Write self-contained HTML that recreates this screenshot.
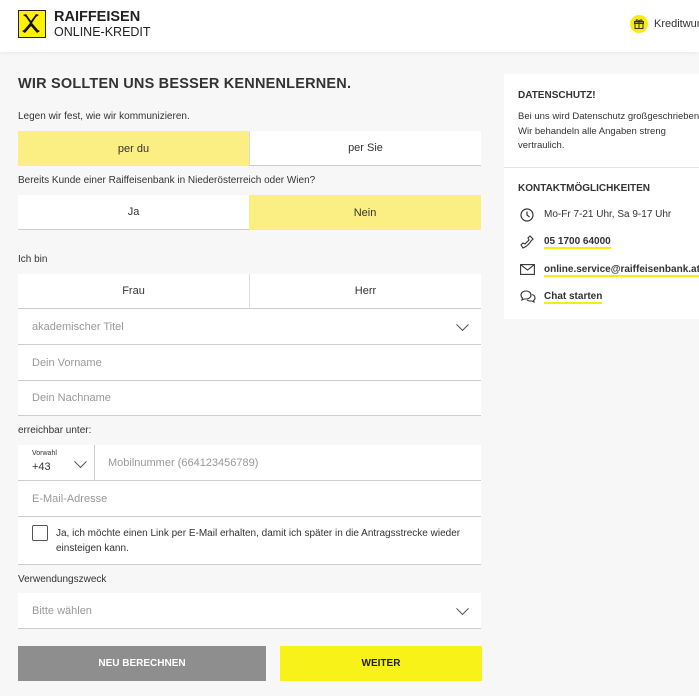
<!DOCTYPE html>
<html><head><meta charset="utf-8"><style>
*{box-sizing:border-box;margin:0;padding:0}
body{width:699px;height:696px;overflow:hidden;background:#f7f7f7;font-family:"Liberation Sans",sans-serif;color:#333;position:relative}
.a{position:absolute}
.hdr{left:0;top:0;width:699px;height:52px;background:#fff;box-shadow:0 1px 4px rgba(0,0,0,.06)}
.box{background:#fff;border-bottom:1px solid #ccc}
.t{font-size:11px;color:#333}
.ph{font-size:11px;color:#999;padding-left:14px;display:flex;align-items:center}
.tg{display:flex;align-items:center;justify-content:center;font-size:11px;color:#333}
.y{background:#fbef84}
.chev{position:absolute;right:14px;top:50%;width:9px;height:9px;border-right:1.3px solid #555;border-bottom:1.3px solid #555;transform:translateY(-75%) rotate(45deg)}
.lnk{border-bottom:2px solid #f5eb15;font-weight:bold;font-size:10px;color:#333}
</style></head><body>
<div class="a hdr">
  <div class="a" style="left:18px;top:10px;width:28px;height:28px;background:#fff200;border:1.5px solid #222">
    <svg width="25" height="25" viewBox="0 0 25 25"><path d="M4 4 L7 3 L12 10 L17 3 L20 4 L17 6 L13 12 L19 19 L21 20 L18 22 L12 15 L6 22 L3 20 L5 19 L11 12 L7 6 Z" fill="#111"/></svg>
  </div>
  <div class="a" style="left:54px;top:9px;font-size:14.5px;font-weight:bold;color:#222">RAIFFEISEN</div>
  <div class="a" style="left:54px;top:25px;font-size:12.5px;color:#222">ONLINE-KREDIT</div>
  <div class="a" style="left:630px;top:15px;width:18px;height:18px;border-radius:50%;background:#f5eb15">
    <svg width="18" height="18" viewBox="0 0 18 18"><rect x="5" y="8" width="8" height="5.5" fill="none" stroke="#333" stroke-width="1"/><rect x="4.5" y="6.5" width="9" height="2" fill="none" stroke="#333" stroke-width="1"/><path d="M9 6.5v7M9 6.5c-1-2-3-2-3-1s2 1 3 1c1 0 3 0 3-1s-2-1-3 1" fill="none" stroke="#333" stroke-width="1"/></svg>
  </div>
  <div class="a" style="left:654px;top:18px;font-size:11px;color:#333;white-space:nowrap">Kreditwunsch</div>
</div>
<div class="a" style="left:18px;top:76px;font-size:14.5px;font-weight:bold;color:#333;letter-spacing:.2px">WIR SOLLTEN UNS BESSER KENNENLERNEN.</div>
<div class="a t" style="left:18px;top:111px;font-size:10px">Legen wir fest, wie wir kommunizieren.</div>
<div class="a tg y" style="left:18px;top:131px;width:231px;height:35px">per du</div>
<div class="a tg box" style="left:249px;top:131px;width:232px;height:35px;border-left:1px solid #ddd">per Sie</div>
<div class="a t" style="left:18px;top:175px;font-size:10px">Bereits Kunde einer Raiffeisenbank in Niederösterreich oder Wien?</div>
<div class="a tg box" style="left:18px;top:195px;width:231px;height:35px">Ja</div>
<div class="a tg y" style="left:249px;top:195px;width:232px;height:35px">Nein</div>
<div class="a t" style="left:18px;top:254px;font-size:10px">Ich bin</div>
<div class="a tg box" style="left:18px;top:274px;width:231px;height:35px">Frau</div>
<div class="a tg box" style="left:249px;top:274px;width:232px;height:35px;border-left:1px solid #ddd">Herr</div>
<div class="a box ph" style="left:18px;top:309px;width:463px;height:36px">akademischer Titel<span class="chev"></span></div>
<div class="a box ph" style="left:18px;top:345px;width:463px;height:36px">Dein Vorname</div>
<div class="a box ph" style="left:18px;top:381px;width:463px;height:35px">Dein Nachname</div>
<div class="a t" style="left:18px;top:425px;font-size:10px">erreichbar unter:</div>
<div class="a box" style="left:18px;top:445px;width:463px;height:36px">
  <div class="a" style="left:14px;top:5px;font-size:7px">Vorwahl</div>
  <div class="a" style="left:14px;top:16px;font-size:11px">+43</div>
  <span class="chev" style="right:auto;left:58px;top:19px"></span>
  <div class="a" style="left:76px;top:0;width:1px;height:36px;background:#ccc"></div>
  <div class="a ph" style="left:76px;top:0;height:35px">Mobilnummer (664123456789)</div>
</div>
<div class="a box ph" style="left:18px;top:481px;width:463px;height:36px">E-Mail-Adresse</div>
<div class="a box" style="left:18px;top:517px;width:463px;height:48px">
  <div class="a" style="left:14px;top:8px;width:16px;height:16px;border:1.5px solid #555;border-radius:2px"></div>
  <div class="a" style="left:38px;top:9px;font-size:10px;line-height:15px;color:#333;width:420px">Ja, ich möchte einen Link per E-Mail erhalten, damit ich später in die Antragsstrecke wieder einsteigen kann.</div>
</div>
<div class="a t" style="left:18px;top:574px;font-size:10px">Verwendungszweck</div>
<div class="a box ph" style="left:18px;top:593px;width:463px;height:36px">Bitte wählen<span class="chev"></span></div>
<div class="a tg" style="left:18px;top:646px;width:248px;height:35px;background:#8e8e8e;color:#fff;font-weight:bold;font-size:10px">NEU BERECHNEN</div>
<div class="a tg" style="left:280px;top:646px;width:202px;height:35px;background:#f8f218;font-weight:bold;font-size:10px;color:#222">WEITER</div>
<div class="a" style="left:504px;top:74px;width:195px;height:245px;background:#fff">
  <div class="a" style="left:14px;top:16px;font-size:10px;font-weight:bold">DATENSCHUTZ!</div>
  <div class="a" style="left:14px;top:36px;font-size:9.5px;line-height:14.5px;white-space:nowrap">Bei uns wird Datenschutz großgeschrieben.<br>Wir behandeln alle Angaben streng<br>vertraulich.</div>
  <div class="a" style="left:0;top:93px;width:195px;height:1px;background:#e3e3e3"></div>
  <div class="a" style="left:14px;top:109px;font-size:10px;font-weight:bold">KONTAKTMÖGLICHKEITEN</div>
  <svg class="a" style="left:16px;top:134px" width="14" height="14" viewBox="0 0 14 14"><circle cx="7" cy="7" r="6" fill="none" stroke="#333" stroke-width="1.2"/><path d="M7 3.5V7l2.5 2" fill="none" stroke="#333" stroke-width="1.2"/></svg>
  <div class="a" style="left:40px;top:135px;font-size:10px">Mo-Fr 7-21 Uhr, Sa 9-17 Uhr</div>
  <svg class="a" style="left:16px;top:161px" width="14" height="14" viewBox="0 0 14 14"><path d="M10 1l3 3-2 2c-1 2-4 5-6 6L3 13 1 10l2-2 2 1c1-1 3-3 4-4L8 3z" fill="none" stroke="#333" stroke-width="1.1"/></svg>
  <span class="a lnk" style="left:40px;top:162px">05 1700 64000</span>
  <svg class="a" style="left:16px;top:190px" width="15" height="11" viewBox="0 0 15 11"><rect x=".6" y=".6" width="13.8" height="9.8" fill="none" stroke="#333" stroke-width="1.1"/><path d="M.6 .6l6.9 5.5 6.9-5.5" fill="none" stroke="#333" stroke-width="1.1"/></svg>
  <span class="a lnk" style="left:40px;top:190px">online.service@raiffeisenbank.at</span>
  <svg class="a" style="left:16px;top:216px" width="16" height="13" viewBox="0 0 16 13"><path d="M1 5c0-2.5 2.5-4 5-4s5 1.5 5 4-2.5 4-5 4H4L2 10l.5-2C1.5 7.2 1 6 1 5z" fill="none" stroke="#333" stroke-width="1.1"/><path d="M12 4.5c2 .5 3 2 3 3.5 0 1-.5 1.8-1.3 2.3L14 12l-2-1h-2c-1.2 0-2.3-.4-3-1" fill="none" stroke="#333" stroke-width="1.1"/></svg>
  <span class="a lnk" style="left:40px;top:217px">Chat starten</span>
</div>
</body></html>
